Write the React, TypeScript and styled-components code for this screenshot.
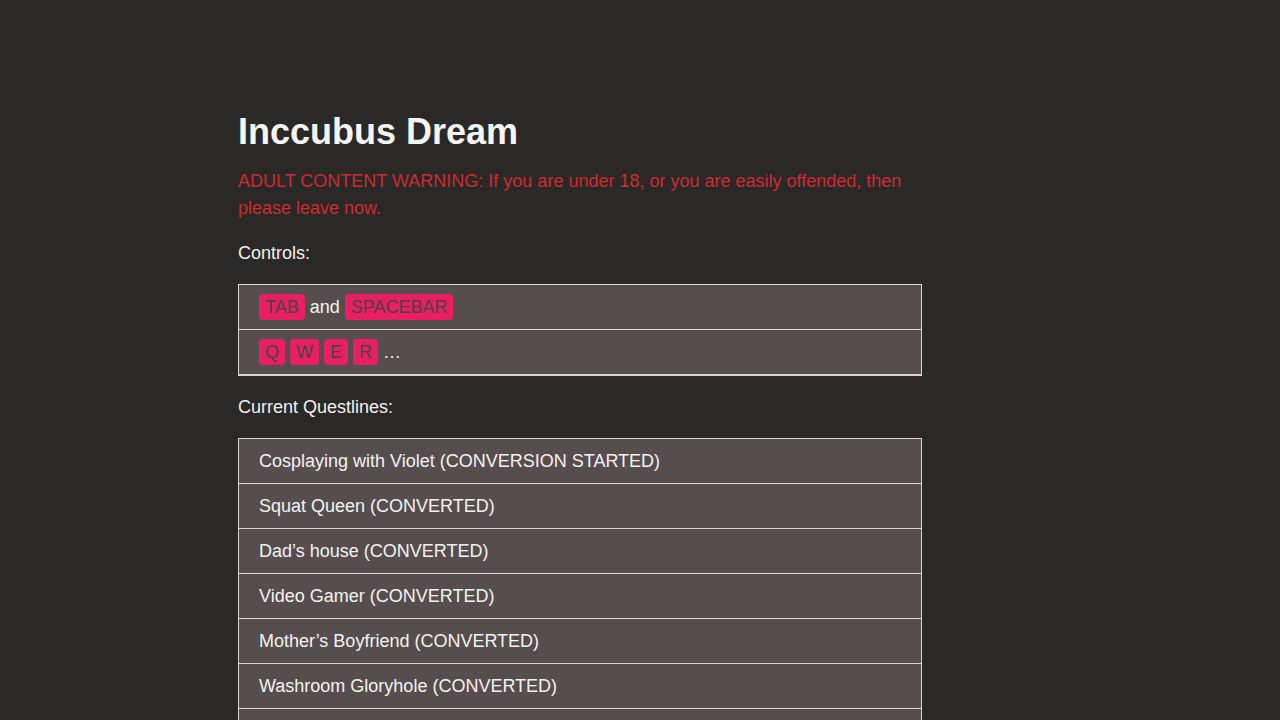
import React from "react";
import styled, { createGlobalStyle } from "styled-components";

const Global = createGlobalStyle`
  html, body { margin: 0; padding: 0; background: #2b2927; }
  body { font-family: "Liberation Sans", Arial, sans-serif; color: #f2f0ef; }
`;

const Page = styled.main`
  padding: 110px 0 40px 238px;
  width: 684px;
`;

const Title = styled.h1`
  margin: 0 0 15px;
  font-size: 36px;
  line-height: 43px;
  font-weight: 700;
  color: #f7f5f4;
`;

const Para = styled.p<{ $warn?: boolean }>`
  margin: 0 0 ${(p) => (p.$warn ? 18 : 17)}px;
  font-size: 18px;
  line-height: 27px;
  color: ${(p) => (p.$warn ? "#cc2b2f" : "#f2f0ef")};
`;

const List = styled.ul`
  list-style: none;
  margin: 0 0 18px;
  padding: 0;
  border: 1px solid #d9d6d4;
`;

const Item = styled.li`
  background: #564e4e;
  padding: 10px 20px;
  height: 24px;
  font-size: 18px;
  line-height: 24px;
  border-bottom: 1px solid #d9d6d4;
  color: #f4f2f1;
  white-space: nowrap;
`;

const Key = styled.kbd`
  font-family: "Liberation Sans", Arial, sans-serif;
  font-size: 18px;
  padding: 3px 6px;
  background: #e91e63;
  color: #4a4346;
  border-radius: 4px;
`;

const quests = [
  "Cosplaying with Violet (CONVERSION STARTED)",
  "Squat Queen (CONVERTED)",
  "Dad\u2019s house (CONVERTED)",
  "Video Gamer (CONVERTED)",
  "Mother\u2019s Boyfriend (CONVERTED)",
  "Washroom Gloryhole (CONVERTED)",
  "Gym Buddy (CONVERTED)",
];

export default function App() {
  return (
    <>
      <Global />
      <Page>
        <Title>Inccubus Dream</Title>
        <Para $warn>
          ADULT CONTENT WARNING: If you are under 18, or you are easily offended, then please leave now.
        </Para>
        <Para>Controls:</Para>
        <List>
          <Item>
            <Key>TAB</Key> and <Key>SPACEBAR</Key>
          </Item>
          <Item>
            <Key>Q</Key> <Key>W</Key> <Key>E</Key> <Key>R</Key> …
          </Item>
        </List>
        <Para>Current Questlines:</Para>
        <List>
          {quests.map((q) => (
            <Item key={q}>{q}</Item>
          ))}
        </List>
      </Page>
    </>
  );
}
